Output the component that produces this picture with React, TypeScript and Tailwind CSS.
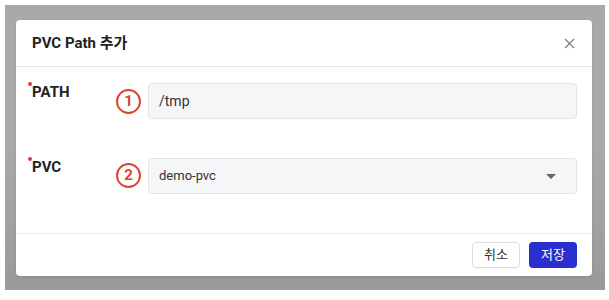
import { X } from 'lucide-react';

function Badge({ n }: { n: number }) {
  return (
    <span className="flex h-[25px] w-[25px] items-center justify-center rounded-full border-2 border-[#d8452f] text-[15px] font-bold text-[#d8452f]">
      {n}
    </span>
  );
}

function Label({ text }: { text: string }) {
  return (
    <div className="relative mt-[-2px] w-[84px] pl-[16px] text-[15px] leading-[22px] font-bold text-[#222]">
      <span className="absolute left-[12px] top-[1px] h-[4px] w-[4px] rounded-full bg-[#e5393a]" />
      {text}
    </div>
  );
}

export default function App() {
  return (
    <div className="h-[300px] w-[609px] bg-white p-[5px] font-['Roboto','Noto_Sans_CJK_KR',sans-serif]">
      <div className="h-[285px] w-[600px] bg-gradient-to-b from-[#a9a9a9] via-[#a9a9a9] to-[#9a9a9a] pl-[11px] pt-[15px]">
        <div className="w-[576px] rounded-[4px] bg-white shadow-sm">
          {/* 헤더 */}
          <div className="flex h-[47px] items-center justify-between border-b border-[#e6e6e6] pl-[16px] pr-[14px]">
            <h2 className="text-[15px] font-bold text-[#222]">PVC Path 추가</h2>
            <X size={17} strokeWidth={1.5} className="text-[#777]" />
          </div>

          {/* 본문 */}
          <div className="flex h-[166px] flex-col gap-[39px] pt-[16px] pr-[15px]">
            <div className="flex items-start">
              <Label text="PATH" />
              <div className="flex w-[48px] pt-[6px] pl-[16px]">
                <Badge n={1} />
              </div>
              <div className="flex h-[36px] flex-1 items-center rounded-[4px] border border-[#e3e5e8] bg-[#f5f6f8] px-[10px] text-[14px] text-[#333]">
                /tmp
              </div>
            </div>
            <div className="flex items-start">
              <Label text="PVC" />
              <div className="flex w-[48px] pt-[5px] pl-[16px]">
                <Badge n={2} />
              </div>
              <div className="flex h-[36px] flex-1 items-center justify-between rounded-[4px] border border-[#e3e5e8] bg-[#f5f6f8] pl-[10px] pr-[20px] text-[13px] text-[#333]">
                demo-pvc
                <span className="h-0 w-0 border-x-[5px] border-t-[5px] border-x-transparent border-t-[#666]" />
              </div>
            </div>
          </div>

          {/* 하단 버튼 */}
          <div className="flex h-[43px] items-center justify-end gap-[9px] border-t border-[#ececec] pr-[15px]">
            <button className="h-[26px] w-[48px] rounded-[4px] border border-[#dcdcdc] bg-white text-[13px] text-[#333]">
              취소
            </button>
            <button className="h-[26px] w-[48px] rounded-[4px] bg-[#2a2fcf] text-[13px] text-white">
              저장
            </button>
          </div>
        </div>
      </div>
    </div>
  );
}
